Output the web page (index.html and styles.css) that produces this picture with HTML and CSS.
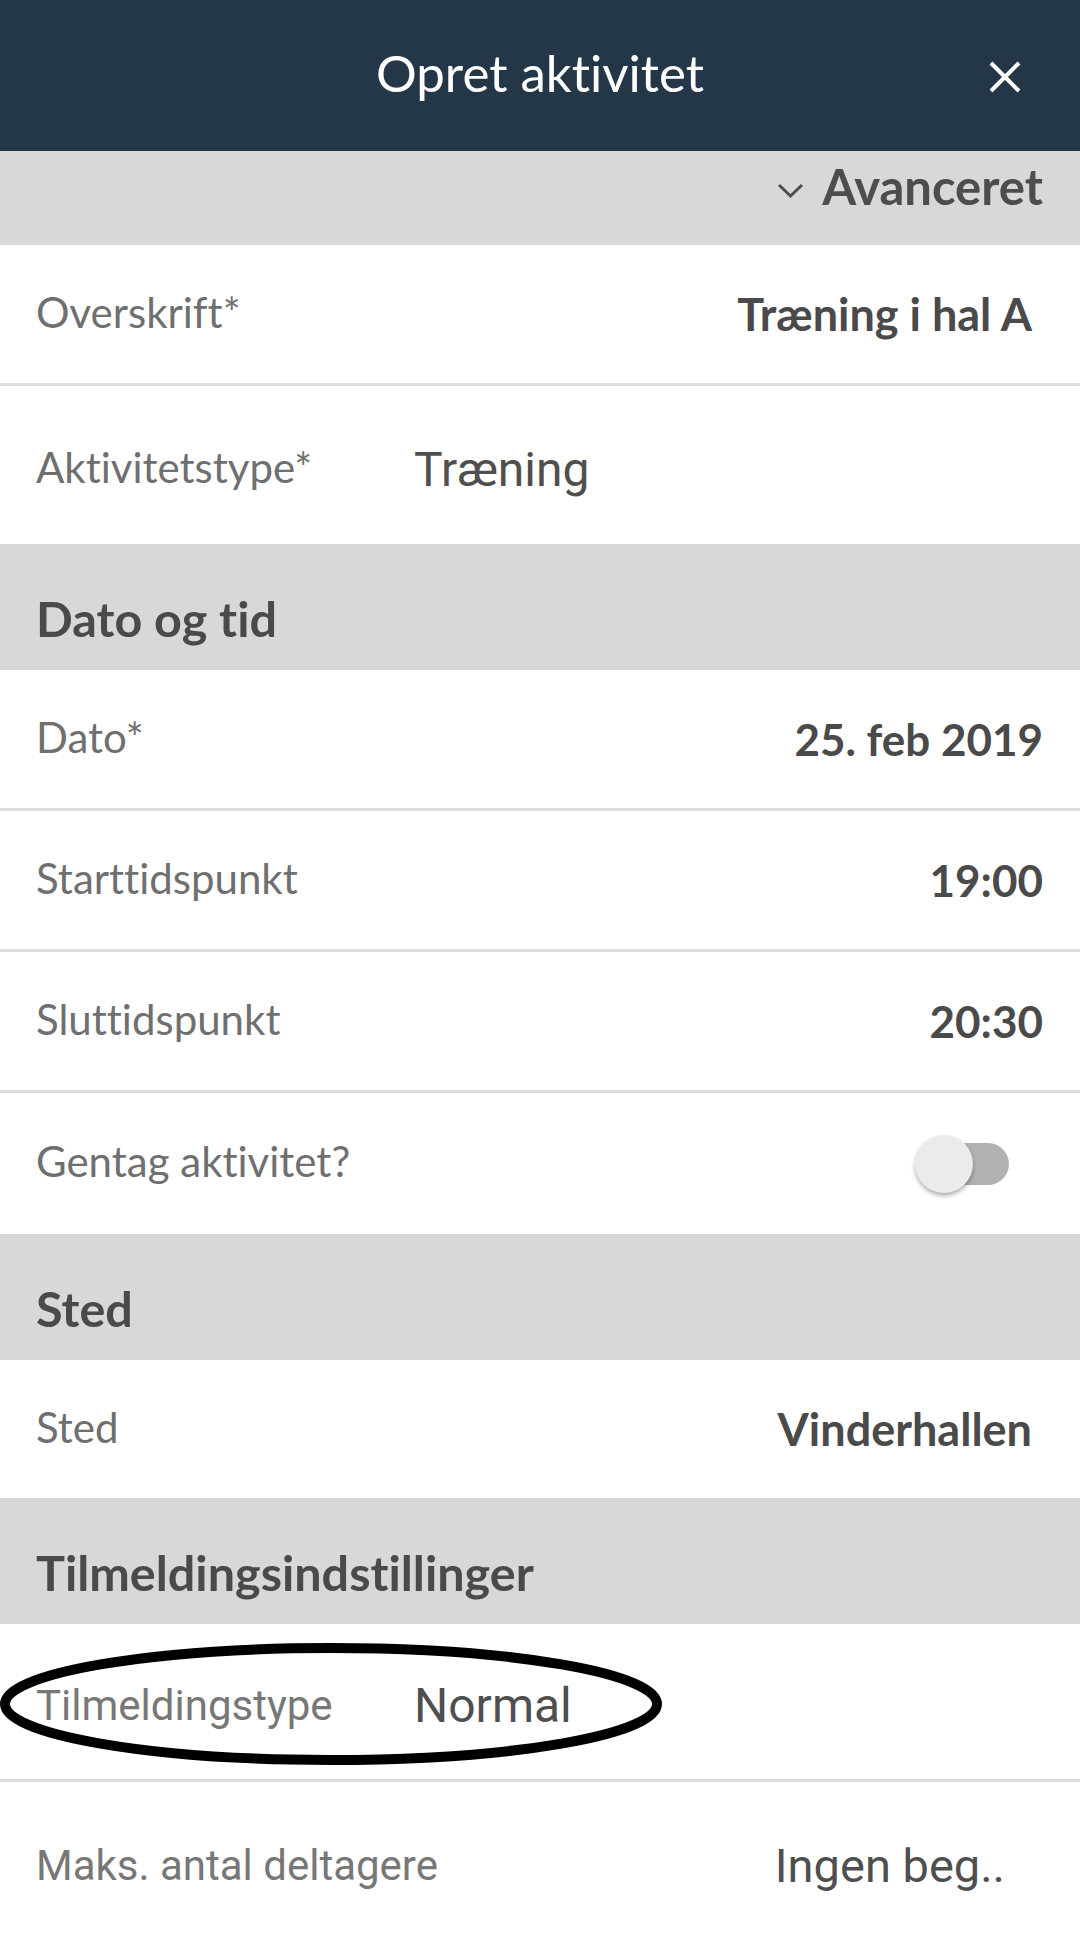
FILE: index.html
```html
<!DOCTYPE html>
<html lang="da">
<head>
    <meta charset="UTF-8">
    <meta name="viewport" content="width=device-width, initial-scale=1.0">
    <title>Opret aktivitet</title>
    <link rel="stylesheet" href="styles.css">
</head>
<body>
    <div class="topbar">
        <div></div>
        <div class="topbar-title">Opret aktivitet</div>
        <div class="close-btn">
            <svg width="32" height="32" viewBox="0 0 32 32">
                <line x1="2" y1="2" x2="30" y2="30" stroke="#fff" stroke-width="4"/>
                <line x1="30" y1="2" x2="2" y2="30" stroke="#fff" stroke-width="4"/>
            </svg>
        </div>
    </div>

    <div class="advanced-bar">
        <svg class="chevron" width="27" height="16" viewBox="0 0 27 16">
            <polyline points="2,2 13.5,13 25,2" fill="none" stroke="#4d4d4d" stroke-width="3"/>
        </svg>
        <span>Avanceret</span>
    </div>

    <div class="row">
        <div class="label">Overskrift*</div>
        <div class="value value-input">Træning i hal A</div>
    </div>

    <div class="row row-tall row-plain">
        <div class="label label-col">Aktivitetstype*</div>
        <div class="native-value">Træning</div>
    </div>

    <div class="section-head">Dato og tid</div>

    <div class="row">
        <div class="label">Dato*</div>
        <div class="value">25. feb 2019</div>
    </div>
    <div class="row">
        <div class="label">Starttidspunkt</div>
        <div class="value">19:00</div>
    </div>
    <div class="row">
        <div class="label">Sluttidspunkt</div>
        <div class="value">20:30</div>
    </div>
    <div class="row row-plain">
        <div class="label">Gentag aktivitet?</div>
        <div class="toggle">
            <div class="toggle-track"></div>
            <div class="toggle-thumb"></div>
        </div>
    </div>

    <div class="section-head">Sted</div>

    <div class="row row-plain row-short">
        <div class="label">Sted</div>
        <div class="value value-input">Vinderhallen</div>
    </div>

    <div class="section-head">Tilmeldingsindstillinger</div>

    <div class="row row-tall annotated">
        <div class="native-label label-col">Tilmeldingstype</div>
        <div class="native-value">Normal</div>
        <svg class="marker" width="680" height="130" viewBox="0 0 680 130">
            <ellipse cx="340" cy="65" rx="326" ry="56" fill="none" stroke="#000" stroke-width="10"/>
        </svg>
    </div>

    <div class="row row-tall row-plain">
        <div class="native-label">Maks. antal deltagere</div>
        <div class="native-value select-value">Ingen beg..</div>
    </div>
</body>
</html>
```

FILE: styles.css
```css
body {
    margin: 0;
    width: 1080px;
    background-color: white;
    font-family: Lato, "Open Sans", sans-serif;
    font-variant-ligatures: none;
}

.topbar {
    height: 151px;
    background-color: #243749;
    display: grid;
    grid-template-columns: 1fr auto 1fr;
    align-items: center;
}

.topbar-title {
    color: white;
    font-size: 51px;
    padding-bottom: 6px;
}

.close-btn {
    justify-self: end;
    padding-right: 59px;
    height: 32px;
    margin-top: 2px;
}

.advanced-bar {
    height: 94px;
    background-color: #d8d8d8;
    display: flex;
    justify-content: flex-end;
    align-items: center;
    padding-right: 37px;
    padding-bottom: 24px;
    box-sizing: border-box;
    color: #4d4d4d;
    font-size: 49px;
    font-weight: bold;
}

.chevron {
    margin-right: 18px;
    margin-top: 10px;
}

.row {
    height: 141px;
    box-sizing: border-box;
    border-bottom: 3px solid #dedede;
    display: flex;
    align-items: center;
    padding: 0 37px 0 36px;
    position: relative;
}

.row-plain {
    border-bottom: none;
}

.row-tall {
    height: 158px;
    padding-top: 8px;
}

.row-short {
    height: 138px;
}

.label {
    color: #6f6f6f;
    font-size: 42px;
    padding-bottom: 5px;
}

.label-col {
    width: 378px;
    flex-shrink: 0;
}

.value {
    margin-left: auto;
    color: #4a4a4a;
    font-size: 44px;
    font-weight: bold;
}

.value-input {
    padding-right: 11px;
    font-size: 45px;
}

.native-label {
    font-family: Roboto, sans-serif;
    color: #777777;
    font-size: 42px;
}

.native-value {
    font-family: Roboto, sans-serif;
    color: #4f4f4f;
    font-size: 48px;
}

.select-value {
    margin-left: auto;
    padding-right: 38px;
    font-size: 47px;
}

.section-head {
    height: 126px;
    background-color: #d8d8d8;
    box-sizing: border-box;
    padding: 22px 36px 0;
    display: flex;
    align-items: center;
    color: #4a4a4a;
    font-size: 48.5px;
    font-weight: bold;
}

.toggle {
    margin-left: auto;
    margin-right: 34px;
    width: 94px;
    height: 58px;
    position: relative;
}

.toggle-track {
    position: absolute;
    right: 0;
    top: 8px;
    width: 80px;
    height: 42px;
    border-radius: 21px;
    background-color: #b1b1b1;
}

.toggle-thumb {
    position: absolute;
    left: 0;
    top: 0;
    width: 58px;
    height: 58px;
    border-radius: 50%;
    background-color: #ebebeb;
    box-shadow: 0 3px 4px rgba(0, 0, 0, 0.3);
}

.marker {
    position: absolute;
    left: -9px;
    top: 15px;
}
```
